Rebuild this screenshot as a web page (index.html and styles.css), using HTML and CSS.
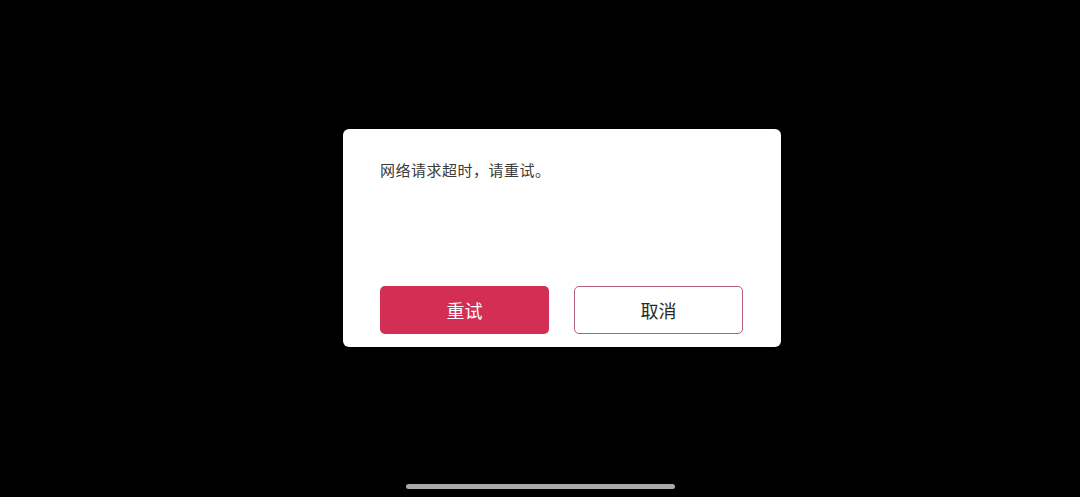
FILE: index.html
```html
<!DOCTYPE html>
<html lang="zh">
<head>
<meta charset="utf-8">
<link rel="stylesheet" href="styles.css">
</head>
<body>
<div class="screen">
  <div class="dialog">
    <p class="message">网络请求超时，请重试。</p>
    <div class="actions">
      <button class="btn btn-primary">重试</button>
      <button class="btn btn-secondary">取消</button>
    </div>
  </div>
  <div class="home-indicator"></div>
</div>
</body>
</html>
```

FILE: styles.css
```css
html, body {
  margin: 0;
  padding: 0;
  background: #000;
}
.screen {
  width: 1080px;
  height: 497px;
  display: flex;
  flex-direction: column;
  font-family: "Noto Sans CJK SC", "Noto Sans", sans-serif;
}
.dialog {
  margin-top: 129px;
  margin-left: 343px;
  width: 438px;
  height: 218px;
  box-sizing: border-box;
  background: #fff;
  border-radius: 6px;
  padding: 30px 38px 13px 37px;
  display: flex;
  flex-direction: column;
  justify-content: space-between;
}
.message {
  margin: 0;
  font-size: 15px;
  line-height: 22px;
  letter-spacing: 0.5px;
  color: #3a3a3a;
}
.actions {
  display: flex;
  gap: 25px;
}
.btn {
  width: 169px;
  height: 48px;
  box-sizing: border-box;
  border-radius: 5px;
  font-family: "Noto Sans CJK SC", "Noto Sans", sans-serif;
  font-size: 18px;
  padding: 0;
}
.btn-primary {
  background: #d32f55;
  color: #fff;
  border: none;
}
.btn-secondary {
  background: #fff;
  color: #2a2a2a;
  border: 1px solid #b8607a;
}
.home-indicator {
  margin-top: auto;
  margin-bottom: 8px;
  align-self: center;
  width: 269px;
  height: 5px;
  border-radius: 3px;
  background: #a8a8a8;
}
```
